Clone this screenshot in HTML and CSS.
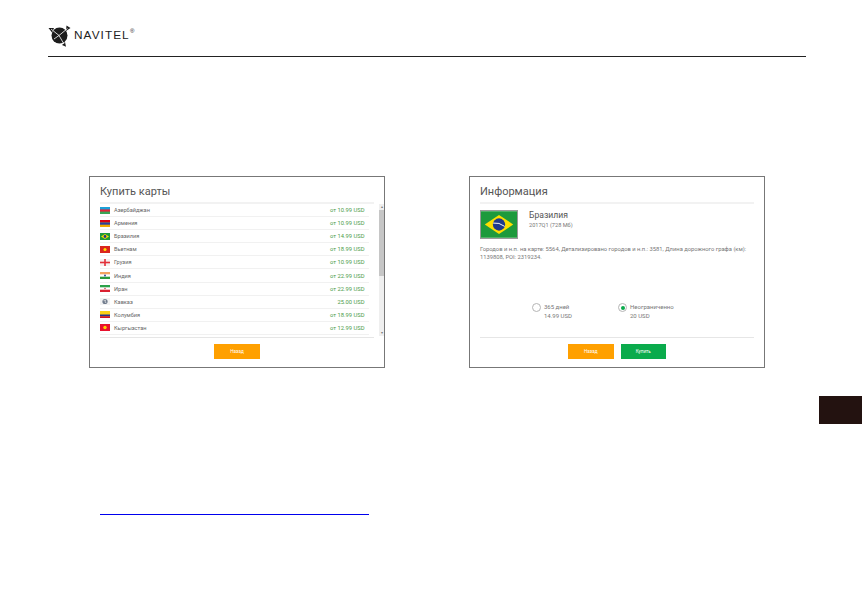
FILE: index.html
```html
<!DOCTYPE html>
<html lang="ru">
<head>
<meta charset="utf-8">
<title>Navitel</title>
<link rel="stylesheet" href="styles.css">
</head>
<body>
<header class="head">
  <svg class="logo-icon" viewBox="0 0 23 22" width="23" height="22" aria-hidden="true">
    <circle cx="11.5" cy="10.5" r="8" fill="#1c1c1c"/>
    <path d="M0.5 3 L6 3 L4 7.5 Z M18.5 0.5 L22.5 3 L18 6 Z M14 20 L18 21.8 L17 17 Z" fill="#1c1c1c"/>
    <path d="M3 4 L11 10.5 L19.5 3.5 M11 10.5 L16 19 M11 10.5 L6 14" stroke="#fff" stroke-width="0.8" fill="none"/>
  </svg>
  <span class="logo-text">NAVITEL</span><span class="logo-mark">®</span>
</header>

<main class="screens">
  <section class="card">
    <h2 class="card-title">Купить карты</h2>
    <div class="list-wrap">
      <ul class="list">
        <li class="row"><svg class="flag" viewBox="0 0 10 7"><rect width="10" height="7" fill="#e0263c"/><rect width="10" height="2.4" fill="#1ba0d8"/><rect y="4.6" width="10" height="2.4" fill="#3aa655"/></svg><span class="name">Азербайджан</span><span class="price">от 10.99 USD</span></li>
        <li class="row"><svg class="flag" viewBox="0 0 10 7"><rect width="10" height="7" fill="#f2a800"/><rect width="10" height="2.4" fill="#d90012"/><rect y="2.4" width="10" height="2.3" fill="#2a3f9e"/></svg><span class="name">Армения</span><span class="price">от 10.99 USD</span></li>
        <li class="row"><svg class="flag" viewBox="0 0 10 7"><rect width="10" height="7" fill="#1d9a3c"/><path d="M5 1 L9 3.5 L5 6 L1 3.5 Z" fill="#fddf00"/><circle cx="5" cy="3.5" r="1.4" fill="#1f3a8a"/></svg><span class="name">Бразилия</span><span class="price">от 14.99 USD</span></li>
        <li class="row"><svg class="flag" viewBox="0 0 10 7"><rect width="10" height="7" fill="#da251d"/><circle cx="5" cy="3.5" r="1.5" fill="#ffdf00"/></svg><span class="name">Вьетнам</span><span class="price">от 18.99 USD</span></li>
        <li class="row"><svg class="flag" viewBox="0 0 10 7"><rect width="10" height="7" fill="#f6f0f0"/><rect x="4.2" width="1.6" height="7" fill="#e2303a"/><rect y="2.7" width="10" height="1.6" fill="#e2303a"/></svg><span class="name">Грузия</span><span class="price">от 10.99 USD</span></li>
        <li class="row"><svg class="flag" viewBox="0 0 10 7"><rect width="10" height="7" fill="#fff"/><rect width="10" height="2.3" fill="#f4a460"/><rect y="4.7" width="10" height="2.3" fill="#2c9a3a"/><circle cx="5" cy="3.5" r="0.9" fill="#23388f"/></svg><span class="name">Индия</span><span class="price">от 22.99 USD</span></li>
        <li class="row"><svg class="flag" viewBox="0 0 10 7"><rect width="10" height="7" fill="#fff"/><rect width="10" height="2.3" fill="#2ba24a"/><rect y="4.7" width="10" height="2.3" fill="#da2030"/><circle cx="5" cy="3.5" r="0.8" fill="#c8454f"/></svg><span class="name">Иран</span><span class="price">от 22.99 USD</span></li>
        <li class="row"><svg class="flag" viewBox="0 0 10 7"><rect width="10" height="7" fill="#f2f2f2"/><circle cx="5" cy="3.5" r="2.6" fill="#6f7b8c"/><path d="M3.6 2.6 L5.6 2.2 L5 4.2 L6.4 4.8" stroke="#e8e8e8" stroke-width="0.7" fill="none"/></svg><span class="name">Кавказ</span><span class="price">25.00 USD</span></li>
        <li class="row"><svg class="flag" viewBox="0 0 10 7"><rect width="10" height="7" fill="#fcd116"/><rect y="3.5" width="10" height="1.75" fill="#24358f"/><rect y="5.25" width="10" height="1.75" fill="#ce1126"/></svg><span class="name">Колумбия</span><span class="price">от 18.99 USD</span></li>
        <li class="row"><svg class="flag" viewBox="0 0 10 7"><rect width="10" height="7" fill="#e8112d"/><circle cx="5" cy="3.5" r="1.7" fill="#ffd200"/></svg><span class="name">Кыргызстан</span><span class="price">от 12.99 USD</span></li>
      </ul>
      <div class="scrollbar"><span class="arrow">▴</span><span class="thumb"></span><span class="arrow">▾</span></div>
    </div>
    <footer class="card-foot">
      <button class="btn btn-orange" type="button">Назад</button>
    </footer>
  </section>

  <section class="card">
    <h2 class="card-title">Информация</h2>
    <div class="info">
      <div class="info-head">
        <svg class="info-flag" viewBox="0 0 38 28"><rect width="38" height="28" fill="#1d9a3c"/><path d="M19 4 L34 14 L19 24 L4 14 Z" fill="#fddf00"/><circle cx="19" cy="14" r="6.5" fill="#1f3a8a"/><path d="M12.8 12.5 Q19 11.5 25 16" stroke="#fff" stroke-width="1" fill="none"/></svg>
        <div class="info-titles">
          <div class="info-name">Бразилия</div>
          <div class="info-ver">2017Q1 (728 Мб)</div>
        </div>
      </div>
      <p class="info-desc">Городов и н.п. на карте: 5564, Детализировано городов и н.п.: 3581, Длина дорожного графа (км): 1139808, POI: 2319234.</p>
      <div class="options">
        <div class="option"><span class="radio"></span><div class="opt-text">365 дней<br>14.99 USD</div></div>
        <div class="option"><span class="radio radio-on"></span><div class="opt-text">Неограниченно<br>20 USD</div></div>
      </div>
    </div>
    <footer class="card-foot">
      <button class="btn btn-orange" type="button">Назад</button>
      <button class="btn btn-green" type="button">Купить</button>
    </footer>
  </section>
</main>

<div class="link-line"><a class="link" href="#"></a></div>
<div class="side-tab"></div>
</body>
</html>
```

FILE: styles.css
```css
* { box-sizing: border-box; }
html, body { margin: 0; padding: 0; }
body {
  width: 862px;
  height: 595px;
  overflow: hidden;
  position: relative;
  background: #fff;
  font-family: Roboto, "Liberation Sans", sans-serif;
  color: #555;
}
.head {
  margin: 0 56px 0 48px;
  height: 57px;
  padding-top: 25px;
  border-bottom: 1px solid #222;
  display: flex;
  align-items: flex-start;
}
.logo-icon { display: block; }
.logo-text {
  margin: 5px 0 0 3px;
  width: 56px;
  font: 10px/12px "Liberation Sans", sans-serif;
  letter-spacing: 0.9px;
  transform: scaleX(1.18);
  transform-origin: left center;
  color: #222;
}
.logo-mark { font: 6px/6px "Liberation Sans", sans-serif; margin: 3px 0 0 0; color: #222; }
.screens {
  margin: 119px 0 0 89px;
  display: flex;
  gap: 84px;
}
.card {
  width: 296px;
  height: 192px;
  border: 1px solid #777;
  display: flex;
  flex-direction: column;
}
.card-title {
  margin: 0 10px;
  height: 27px;
  padding-top: 7px;
  font-weight: 400;
  font-size: 11px;
  line-height: 16px;
  color: #555;
  border-bottom: 2px solid #f2f2f2;
}
.list-wrap { display: flex; height: 133px; padding-left: 10px; }
.list { list-style: none; margin: 0; padding: 0; width: 269px; }
.row {
  height: 13.1px;
  display: flex;
  align-items: center;
  border-bottom: 1px solid #f1f1f1;
  font-size: 5.6px;
  padding-right: 4.5px;
}
.flag { width: 10px; height: 7px; flex: none; }
.name { margin-left: 4px; color: #666; }
.price { margin-left: auto; color: #4a9c4a; font-size: 5.8px; }
.scrollbar {
  margin-left: 10px;
  width: 5px;
  height: 132px;
  background: #efefef;
  display: flex;
  flex-direction: column;
  align-items: center;
  font-size: 4px;
  line-height: 6px;
  color: #777;
}
.arrow { height: 6px; flex: none; }
.thumb { width: 5px; height: 66px; background: #c6c6c6; flex: none; }
.scrollbar .arrow:last-child { margin-top: auto; }
.card-foot {
  margin: 0 10px;
  border-top: 1px solid #e6e6e6;
  flex: 1;
  display: flex;
  justify-content: center;
  gap: 7px;
  padding-top: 6px;
}
.btn {
  width: 45.5px;
  height: 15px;
  border: 0;
  padding: 0;
  font: 4.6px/15px Roboto, sans-serif;
  color: #fff;
}
.btn-orange { background: #ffa000; }
.btn-green { background: #0aab4c; }
.info { height: 133px; padding: 6px 10px 0; }
.info-head { display: flex; }
.info-flag { width: 38px; height: 29px; border: 1px solid #999; flex: none; }
.info-titles { margin-left: 11px; }
.info-name { font-size: 8.6px; line-height: 11px; color: #555; }
.info-ver { font-size: 5.6px; line-height: 8px; color: #777; }
.info-desc {
  margin: 6px 0 0;
  font-size: 5.8px;
  line-height: 8px;
  color: #777;
  width: 272px;
}
.options { display: flex; margin-top: 42px; padding-left: 52px; }
.option { display: flex; align-items: flex-start; width: 86px; }
.radio {
  width: 9px;
  height: 9px;
  border-radius: 50%;
  border: 1px solid #b5b5b5;
  background: #fff;
  flex: none;
  display: flex;
  align-items: center;
  justify-content: center;
}
.radio-on::after {
  content: "";
  width: 4px;
  height: 4px;
  border-radius: 50%;
  background: #0aab4c;
}
.opt-text { margin-left: 3px; font-size: 6px; line-height: 8.5px; color: #777; }
.link-line { margin: 146px 0 0 100px; height: 1px; }
.link { display: block; width: 269px; height: 1px; background: #0000ee; }
.side-tab {
  position: absolute;
  left: 819px;
  top: 396px;
  width: 43px;
  height: 28px;
  background: #231210;
}
```
